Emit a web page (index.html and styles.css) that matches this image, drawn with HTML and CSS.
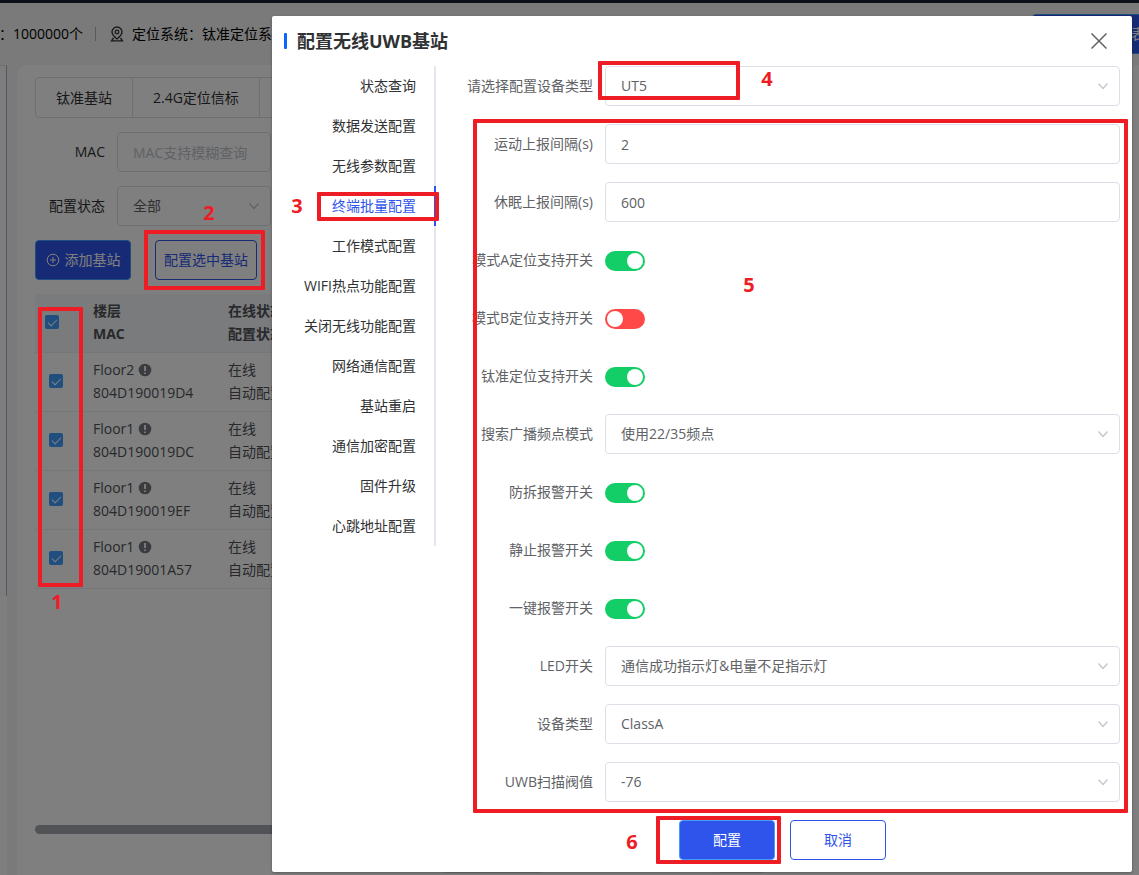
FILE: index.html
```html
<!DOCTYPE html>
<html lang="zh-CN">
<head>
<meta charset="utf-8">
<title>配置无线UWB基站</title>
<link rel="stylesheet" href="styles.css">
</head>
<body>
<svg class="defs" aria-hidden="true">
  <symbol id="chevron" viewBox="0 0 12 12"><path d="M1.5 3.5 6 8.5l4.500-5" fill="none" stroke="currentColor" stroke-width="1.200"/></symbol>
  <symbol id="info" viewBox="0 0 14 14"><circle cx="7" cy="7" r="6.300" fill="currentColor"/><path d="M7 3v5M7 9.500v1.600" stroke="#fff" stroke-width="1.800"/></symbol>
</svg>

<div class="page">
  <div class="topbar"></div>
  <header class="header">
    <span>：1000000个</span>
    <i class="divider"></i>
    <svg class="pin" viewBox="0 0 14 16" fill="none" stroke="currentColor" stroke-width="1.300"><path d="M7 13C4 10.500 2 8.500 2 6a5 5 0 0 1 10 0c0 2.500-2 4.500-5 7z"/><circle cx="7" cy="6" r="1.800"/><path d="M3.500 12 1.500 14.800h11L10.500 12"/></svg>
    <span>定位系统：钛准定位系统</span>
    <button class="btn primary export" type="button">表</button>
  </header>
  <div class="body">
    <aside class="side"><div class="side-line"></div></aside>
    <main class="card">
      <nav class="tabs">
        <button type="button">钛准基站</button>
        <button type="button">2.4G定位信标</button>
        <button type="button"></button>
      </nav>
      <div class="filter">
        <label for="mac">MAC</label>
        <input class="control" id="mac" placeholder="MAC支持模糊查询">
      </div>
      <div class="filter">
        <label for="state">配置状态</label>
        <div class="select"><select class="control" id="state"><option>全部</option></select><svg class="chev"><use href="#chevron"/></svg></div>
      </div>
      <div class="actions">
        <button class="btn primary add" type="button"><svg viewBox="0 0 14 14" fill="none" stroke="currentColor"><circle cx="7" cy="7" r="5.800"/><path d="M7 4v6M4 7h6"/></svg>添加基站</button>
        <button class="btn outline pick" type="button">配置选中基站</button>
      </div>
      <table class="stations">
        <colgroup><col class="c-check"><col class="c-floor"><col></colgroup>
        <thead><tr><th><input type="checkbox" class="check" aria-label="全选" checked></th><th>楼层<br>MAC</th><th>在线状态<br>配置状态</th></tr></thead>
        <tbody>
          <tr><td><input type="checkbox" class="check" aria-label="804D190019D4" checked></td><td>Floor2 <svg class="info"><use href="#info"/></svg><br>804D190019D4</td><td>在线<br>自动配置</td></tr>
          <tr><td><input type="checkbox" class="check" aria-label="804D190019DC" checked></td><td>Floor1 <svg class="info"><use href="#info"/></svg><br>804D190019DC</td><td>在线<br>自动配置</td></tr>
          <tr><td><input type="checkbox" class="check" aria-label="804D190019EF" checked></td><td>Floor1 <svg class="info"><use href="#info"/></svg><br>804D190019EF</td><td>在线<br>自动配置</td></tr>
          <tr><td><input type="checkbox" class="check" aria-label="804D19001A57" checked></td><td>Floor1 <svg class="info"><use href="#info"/></svg><br>804D19001A57</td><td>在线<br>自动配置</td></tr>
        </tbody>
      </table>
      <div class="scrollbar"></div>
      <div class="pager">
        <select class="page-size" aria-label="每页条数"></select>
        <input class="page-jump" aria-label="页码">
      </div>
    </main>
  </div>
</div>

<div class="overlay">
  <section class="dialog" role="dialog" aria-labelledby="dlg-title">
    <header class="dialog-head">
      <h1 id="dlg-title">配置无线UWB基站</h1>
      <button class="close" type="button" aria-label="关闭"><svg viewBox="0 0 16 16" fill="none" stroke="currentColor" stroke-width="1.500"><path d="M.5.5l15 15M15.500.5l-15 15"/></svg></button>
    </header>
    <div class="dialog-body">
      <nav class="menu">
        <button type="button">状态查询</button>
        <button type="button">数据发送配置</button>
        <button type="button">无线参数配置</button>
        <button type="button" class="active">终端批量配置</button>
        <button type="button">工作模式配置</button>
        <button type="button">WIFI热点功能配置</button>
        <button type="button">关闭无线功能配置</button>
        <button type="button">网络通信配置</button>
        <button type="button">基站重启</button>
        <button type="button">通信加密配置</button>
        <button type="button">固件升级</button>
        <button type="button">心跳地址配置</button>
      </nav>
      <form class="form">
        <div class="row"><label for="f1">请选择配置设备类型</label><div class="select"><select class="control" id="f1"><option>UT5</option></select><svg class="chev"><use href="#chevron"/></svg></div></div>
        <div class="row"><label for="f2">运动上报间隔(s)</label><input class="control" id="f2" value="2"></div>
        <div class="row"><label for="f3">休眠上报间隔(s)</label><input class="control" id="f3" value="600"></div>
        <div class="row"><label for="f4">模式A定位支持开关</label><input type="checkbox" role="switch" class="switch" id="f4" checked></div>
        <div class="row"><label for="f5">模式B定位支持开关</label><input type="checkbox" role="switch" class="switch" id="f5"></div>
        <div class="row"><label for="f6">钛准定位支持开关</label><input type="checkbox" role="switch" class="switch" id="f6" checked></div>
        <div class="row"><label for="f7">搜索广播频点模式</label><div class="select"><select class="control" id="f7"><option>使用22/35频点</option></select><svg class="chev"><use href="#chevron"/></svg></div></div>
        <div class="row"><label for="f8">防拆报警开关</label><input type="checkbox" role="switch" class="switch" id="f8" checked></div>
        <div class="row"><label for="f9">静止报警开关</label><input type="checkbox" role="switch" class="switch" id="f9" checked></div>
        <div class="row"><label for="f10">一键报警开关</label><input type="checkbox" role="switch" class="switch" id="f10" checked></div>
        <div class="row"><label for="f11">LED开关</label><div class="select"><select class="control" id="f11"><option>通信成功指示灯&amp;电量不足指示灯</option></select><svg class="chev"><use href="#chevron"/></svg></div></div>
        <div class="row"><label for="f12">设备类型</label><div class="select"><select class="control" id="f12"><option>ClassA</option></select><svg class="chev"><use href="#chevron"/></svg></div></div>
        <div class="row"><label for="f13">UWB扫描阀值</label><div class="select"><select class="control" id="f13"><option>-76</option></select><svg class="chev"><use href="#chevron"/></svg></div></div>
        <div class="foot">
          <button class="btn primary" type="button">配置</button>
          <button class="btn outline" type="button">取消</button>
        </div>
      </form>
    </div>
  </section>
</div>

<div class="marks">
  <div class="mark m1"></div><b class="num n1">1</b>
  <div class="mark m2"></div><b class="num n2">2</b>
  <div class="mark m3"></div><b class="num n3">3</b>
  <div class="mark m4"></div><b class="num n4">4</b>
  <div class="mark m5"></div><b class="num n5">5</b>
  <div class="mark m6"></div><b class="num n6">6</b>
</div>
</body>
</html>
```
FILE: styles.css
```css
* { box-sizing: border-box; }
body {
  margin: 0;
  height: 100vh;
  overflow: hidden;
  position: relative;
  font: 14px/20px "Open Sans", "Noto Sans CJK SC", sans-serif;
  color: #303133;
}
button, input, select { font: inherit; color: inherit; margin: 0; }
button { cursor: pointer; }
.defs { display: none; }

/* page behind the dialog */
.page { height: 100vh; display: flex; flex-direction: column; background: #f4f4f4; overflow: hidden; }
.topbar { height: 3px; flex: none; background: #1a2036; }
.header { height: 62px; flex: none; display: flex; align-items: center; color: #000; white-space: nowrap; margin-left: -1px; }
.divider { width: 1px; height: 14px; margin: 0 14px 0 12px; background: #b4b4b4; }
.pin { width: 14px; height: 16px; margin-right: 8px; color: #333; }
.btn { height: 40px; border-radius: 4px; border: 1px solid #2f54eb; width: 96px; padding: 0; white-space: nowrap; }
.primary { background: #2f54eb; border-color: #409eff; color: #fff; }
.outline { background: #fff; color: #2f54eb; }
.btn.export { margin: 0 -8px 0 auto; width: 115px; flex: none; text-align: left; padding-left: 98px; }
.body { flex: 1; min-height: 0; display: flex; gap: 10px; }
.side { width: 7px; flex: none; background: #fff; }
.side-line { height: 531px; border-top: 1px solid #dcdfe6; border-right: 1px solid #b0b0b4; background: #fafaff; }
.card { flex: 1; min-width: 0; padding: 12px 18px 2px; background: #fff; border-radius: 10px 0 0 0; display: flex; flex-direction: column; overflow: hidden; }
.tabs { display: flex; flex: none; height: 41px; margin-bottom: 14px; border: 1px solid #dcdfe6; border-radius: 4px; }
.tabs button { border: 0; border-right: 1px solid #dcdfe6; background: none; padding: 0 20px; white-space: nowrap; }
.tabs button:last-child { border: 0; }
.filter { display: flex; align-items: center; gap: 12px; margin-bottom: 14px; }
.filter label { width: 70px; text-align: right; }
.filter > .control, .filter > .select { width: 154px; }
.actions { display: flex; gap: 24px; margin-bottom: 14px; }
.add { display: flex; align-items: center; justify-content: center; gap: 5px; }
.add svg { width: 14px; height: 14px; }
.pick { width: 102px; }

.stations { width: 100%; table-layout: fixed; border-collapse: collapse; line-height: 23px; color: #505256; }
.c-check { width: 50px; }
.c-floor { width: 135px; }
.stations th, .stations td { height: 59px; padding: 5px 8px 7px; text-align: left; vertical-align: middle; border-bottom: 1px solid #ebeef5; white-space: nowrap; }
.stations th { height: 58px; padding-bottom: 6px; background: #f5f7fa; font-weight: 700; }
.stations td:first-child { padding-left: 14px; }
.stations th:first-child { padding-left: 10px; }
.check { appearance: none; display: block; width: 14px; height: 14px; border-radius: 2px; background: #409eff; }
.check::after { content: ""; display: block; width: 8px; height: 4px; margin: 4px 3px; border: solid #fff; border-width: 0 0 1px 1px; transform: rotate(-45deg); }
.info { width: 14px; height: 14px; vertical-align: -2px; color: #77797e; }
.scrollbar { height: 9px; flex: none; margin-top: auto; border-radius: 5px; background: #a3a5aa; }
.pager { display: flex; gap: 175px; padding-left: 408px; margin-top: 11px; }
.page-size, .page-jump { appearance: none; height: 28px; padding: 0 8px; border: 1px solid #dcdfe6; border-radius: 3px; background: #fff; }
.page-size { width: 100px; }
.page-jump { width: 46px; }

/* form controls */
.control { width: 100%; height: 40px; padding: 0 15px; border: 1px solid #dcdfe6; border-radius: 4px; background: #fff; color: #606266; appearance: none; }
.control::placeholder { color: #c0c4cc; }
.select { display: grid; align-items: center; }
.select > * { grid-area: 1 / 1; }
.chev { width: 12px; height: 12px; justify-self: end; margin-right: 11px; color: #c0c4cc; pointer-events: none; }
.switch { appearance: none; width: 40px; height: 20px; margin-top: 2px; padding: 2px; border-radius: 10px; background: #ff4949; display: flex; }
.switch::after { content: ""; width: 16px; height: 16px; border-radius: 8px; background: #fff; }
.switch:checked { background: #13ce66; justify-content: flex-end; }

/* dialog */
.overlay { position: absolute; inset: 0; padding: 16px 7px 3px 272px; background: rgba(0, 0, 0, .5); }
.dialog { background: #fff; border-radius: 2px; box-shadow: 0 1px 3px rgba(0, 0, 0, .3); padding: 0 12px 12px; height: 100%; }
.dialog-head { height: 50px; display: flex; align-items: center; justify-content: space-between; }
.dialog-head h1 { margin: 0; font-size: 18px; line-height: 24px; font-weight: 700; display: flex; align-items: center; gap: 10px; }
.dialog-head h1::before { content: ""; width: 3px; height: 16px; border-radius: 1px; background: #0a66ff; }
.close { border: 0; background: none; padding: 0; width: 16px; height: 16px; margin-right: 13px; color: #606266; }
.close svg { display: block; width: 16px; height: 16px; }
.dialog-body { display: flex; align-items: flex-start; gap: 9px; }
.menu { width: 152px; flex: none; display: flex; flex-direction: column; }
.menu button { height: 40px; border: 0; border-right: 2px solid #e4e7ed; background: none; padding: 0 18px 0 0; text-align: right; white-space: nowrap; }
.menu .active { color: #2f54eb; border-color: #2f54eb; }
.form { flex: 1; min-width: 0; display: flex; flex-direction: column; gap: 18px; }
.row { display: grid; grid-template-columns: 148px 1fr; column-gap: 12px; align-items: center; min-height: 40px; }
.row label { text-align: right; color: #606266; white-space: nowrap; }
.foot { display: flex; justify-content: center; gap: 15px; }

/* annotations drawn over the screen */
.marks { position: absolute; inset: 0; overflow: hidden; pointer-events: none; }
.mark { position: absolute; border: 4px solid #ee1c24; border-radius: 1px; }
.num { position: absolute; width: 14px; text-align: center; font: 700 20px/24px "Noto Sans", sans-serif; color: #ee1c24; }
.m1 { left: 38px; top: 307px; width: 45px; height: 280px; }
.m2 { left: 144px; top: 230px; width: 121px; height: 60px; }
.m3 { left: 317px; top: 192px; width: 122px; height: 29px; }
.m4 { left: 598px; top: 61px; width: 142px; height: 39px; }
.m5 { left: 473px; top: 119px; width: 655px; height: 694px; }
.m6 { left: 656px; top: 816px; width: 125px; height: 48px; }
.n1 { left: 50px; top: 590px; }
.n2 { left: 202px; top: 201px; }
.n3 { left: 290px; top: 194px; }
.n4 { left: 760px; top: 67px; }
.n5 { left: 742px; top: 273px; }
.n6 { left: 625px; top: 830px; }
```
